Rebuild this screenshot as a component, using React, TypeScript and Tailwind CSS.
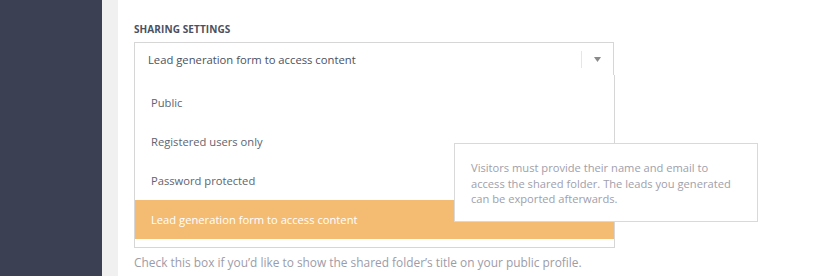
const options = [
  "Public",
  "Registered users only",
  "Password protected",
  "Lead generation form to access content",
];

export default function App() {
  const selected = options[3];

  return (
    <div className="flex h-[276px] w-[819px] overflow-hidden bg-white font-['Open_Sans',sans-serif]">
      {/* Sidebar */}
      <div className="w-[102px] shrink-0 bg-[#3b4052]" />
      <div className="w-[16px] shrink-0 bg-[#f0f0f0]" />

      {/* Content */}
      <div className="relative flex-1 pl-[16px] pt-[22px]">
        <h3 className="text-[10px] font-bold uppercase leading-[14px] tracking-[0.1px] text-[#4b5060]">
          Sharing settings
        </h3>

        <div className="mt-[6px] w-[480px]">
          {/* Select */}
          <div className="flex h-[33px] items-center border-x border-t border-[#d6d6d6] pl-[13px]">
            <span className="flex-1 pt-[3px] text-[11.25px] text-[#4b5060]">{selected}</span>
            <span className="h-[17px] w-px bg-[#e6e6e6]" />
            <span className="flex w-[31px] justify-center pt-[1px]">
              <svg width="7" height="5" viewBox="0 0 7 5">
                <path d="M0 0h7L3.5 5z" fill="#8a8a8a" />
              </svg>
            </span>
          </div>

          {/* Dropdown */}
          <ul className="-mr-px border-x border-b border-[#d6d6d6] pb-[8px] pt-[8px]">
            {options.map((o) => (
              <li
                key={o}
                className={`flex h-[39px] items-center pl-[16px] pt-[2px] text-[11.2px] ${
                  o === selected ? "bg-[#f4bb73] text-white" : "text-[#60646f]"
                }`}
              >
                {o}
              </li>
            ))}
          </ul>
        </div>

        <p className="mt-[6px] text-[11.9px] text-[#9c9ca8]">
          Check this box if you’d like to show the shared folder’s title on your public profile.
        </p>

        {/* Tooltip */}
        <div className="absolute left-[336px] top-[143px] h-[79px] w-[304px] border border-[#d9d9d9] bg-white px-[16px] pt-[16px] text-[11.15px] leading-[15.5px] text-[#a0a0ab]">
          Visitors must provide their name and email to access the shared folder. The leads you generated can be exported afterwards.
        </div>
      </div>
    </div>
  );
}
